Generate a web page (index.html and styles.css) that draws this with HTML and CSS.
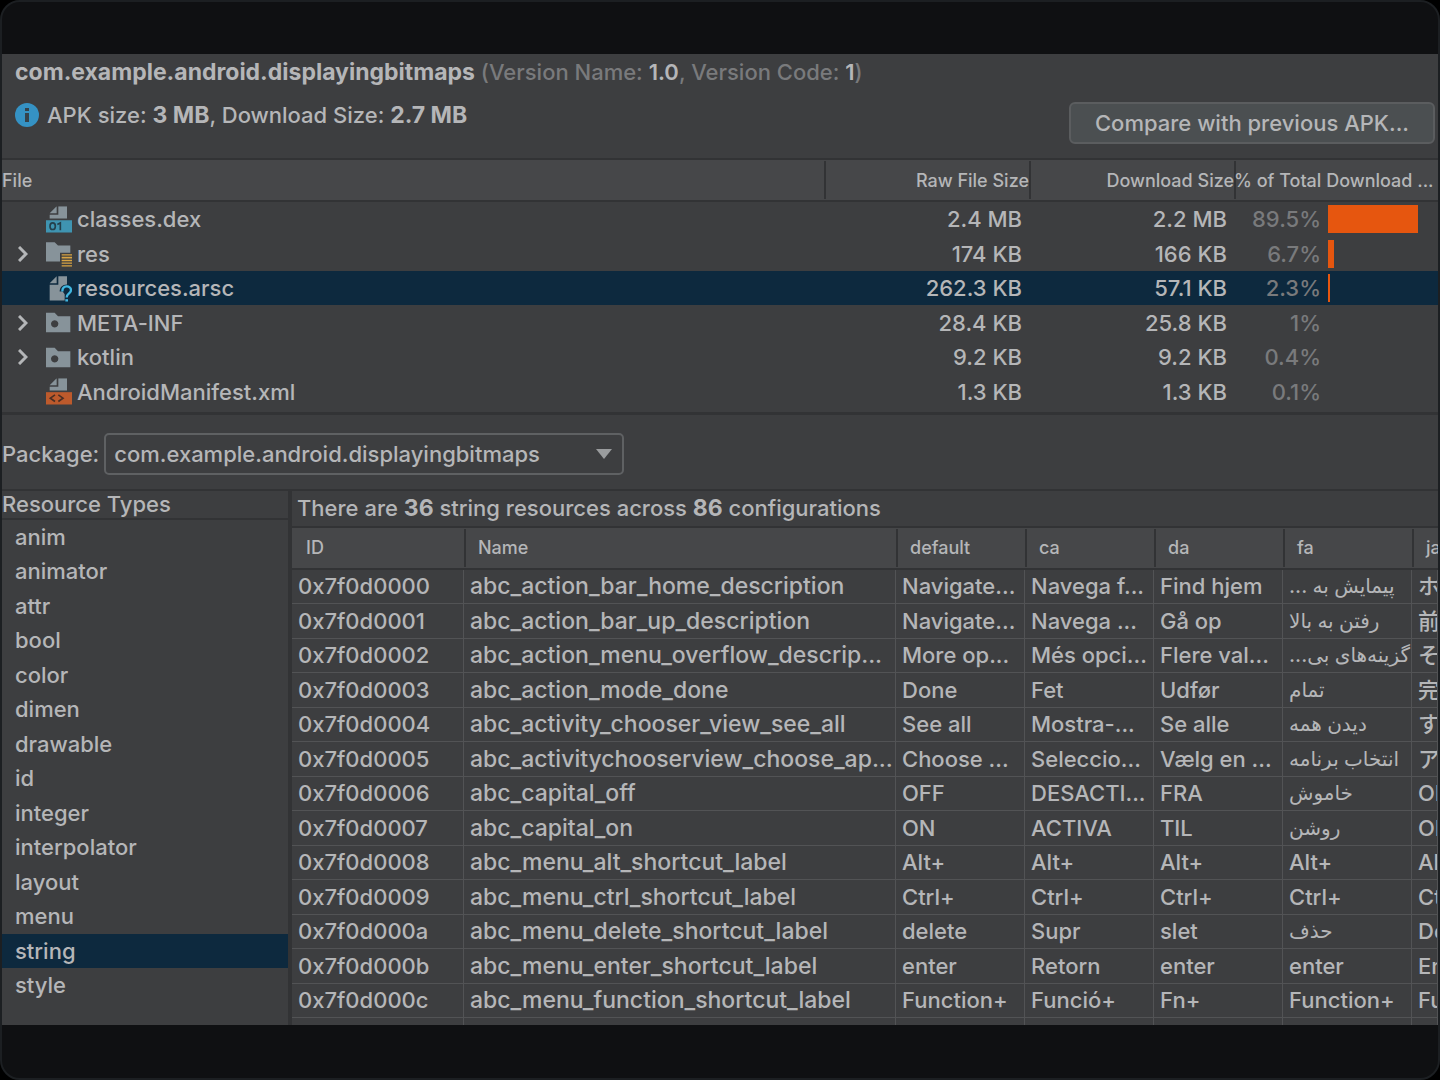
FILE: index.html
```html
<!DOCTYPE html>
<html lang="en">
<head>
<meta charset="utf-8">
<title>APK Analyzer</title>
<link rel="stylesheet" href="styles.css">
</head>
<body>
<svg class="sprite" aria-hidden="true">
  <symbol id="page-top" viewBox="0 0 78 80"><path fill="#87939a" d="M37 0h26v37H11V26h26zM11 21 32 0v21z"/></symbol>
  <symbol id="dex" viewBox="0 0 78 80"><use href="#page-top"/><path fill="#3f94b1" d="M0 42h78v37H0z"/><g fill="none" stroke="#24404c" stroke-width="5"><ellipse cx="20" cy="60" rx="8" ry="10"/><path d="m34 55 9-5v22"/></g></symbol>
  <symbol id="manifest" viewBox="0 0 78 80"><use href="#page-top"/><path fill="#bd5a2c" d="M0 42h78v37H0z"/><path fill="none" stroke="#4b2f24" stroke-width="5" d="m27 50-14 10 14 10M37 50l14 10-14 10"/></symbol>
  <symbol id="folder" viewBox="0 0 78 80"><path fill="#87939a" fill-rule="evenodd" d="M0 11h26l10 10h37v48H0zM26 33a11 11 0 1 0 .1 0z"/></symbol>
  <symbol id="res-folder" viewBox="0 0 78 80"><path fill="#87939a" d="M0 6h26l10 10h37v22H42v26H0z"/><path fill="#d8a343" d="M47 42h31v4H47zM47 50h31v5H47zM47 59h31v4H47zM47 67h31v4H47zM47 75h31v4H47z"/></symbol>
  <symbol id="unknown" viewBox="0 0 78 80"><path fill="#87939a" d="M37 3h26v25c-14 0-22 9-22 21h9l6 8v19H11V29h26zM11 24 32 3v21z"/><path fill="none" stroke="#40b6e0" stroke-width="7" d="M49 49c0-20 26-19 26-4 0 10-13 9-13 22"/><path fill="#40b6e0" d="M58 72h8v7h-8z"/></symbol>
  <symbol id="chevron" viewBox="0 0 10 16"><path fill="none" stroke="#b4b6b8" stroke-width="3" d="m1 1 7 7-7 7"/></symbol>
</svg>
<div class="frame">
<main class="app">
  <header class="summary">
    <div class="summary-text">
      <h1 class="app-id"><b>com.example.android.displayingbitmaps</b> <span class="muted">(Version Name: <b>1.0</b>, Version Code: <b>1</b>)</span></h1>
      <p class="sizes"><svg class="info" viewBox="0 0 24 24" aria-hidden="true"><circle cx="12" cy="12" r="12" fill="#3592c4"/><path fill="#35424b" d="M10 5h4v3h-4zM10 10h4v9h-4z"/></svg><span>APK size: <b>3 MB</b>, Download Size: <b>2.7 MB</b></span></p>
    </div>
    <button class="compare" type="button">Compare with previous APK...</button>
  </header>

  <table class="files">
    <colgroup><col><col class="c-size"><col class="c-size"><col class="c-share"></colgroup>
    <thead><tr><th>File</th><th class="num">Raw File Size</th><th class="num">Download Size</th><th>% of Total Download ...</th></tr></thead>
    <tbody>
      <tr><td><div class="file"><span class="twist"></span><svg class="icon"><use href="#dex"/></svg>classes.dex</div></td><td class="num">2.4 MB</td><td class="num">2.2 MB</td><td><div class="share"><span class="pct">89.5%</span><span class="bar" style="width:90px"></span></div></td></tr>
      <tr><td><div class="file"><span class="twist"><svg class="chevron"><use href="#chevron"/></svg></span><svg class="icon"><use href="#res-folder"/></svg>res</div></td><td class="num">174 KB</td><td class="num">166 KB</td><td><div class="share"><span class="pct">6.7%</span><span class="bar" style="width:6px"></span></div></td></tr>
      <tr class="selected"><td><div class="file"><span class="twist"></span><svg class="icon"><use href="#unknown"/></svg>resources.arsc</div></td><td class="num">262.3 KB</td><td class="num">57.1 KB</td><td><div class="share"><span class="pct">2.3%</span><span class="bar" style="width:2px"></span></div></td></tr>
      <tr><td><div class="file"><span class="twist"><svg class="chevron"><use href="#chevron"/></svg></span><svg class="icon"><use href="#folder"/></svg>META-INF</div></td><td class="num">28.4 KB</td><td class="num">25.8 KB</td><td><div class="share"><span class="pct">1%</span></div></td></tr>
      <tr><td><div class="file"><span class="twist"><svg class="chevron"><use href="#chevron"/></svg></span><svg class="icon"><use href="#folder"/></svg>kotlin</div></td><td class="num">9.2 KB</td><td class="num">9.2 KB</td><td><div class="share"><span class="pct">0.4%</span></div></td></tr>
      <tr><td><div class="file"><span class="twist"></span><svg class="icon"><use href="#manifest"/></svg>AndroidManifest.xml</div></td><td class="num">1.3 KB</td><td class="num">1.3 KB</td><td><div class="share"><span class="pct">0.1%</span></div></td></tr>
    </tbody>
  </table>

  <div class="package">
    <label for="package">Package:</label>
    <div class="picker">
      <select id="package"><option>com.example.android.displayingbitmaps</option></select>
      <svg class="arrow" viewBox="0 0 16 10" aria-hidden="true"><path fill="#9a9c9e" d="M0 0h16L8 10z"/></svg>
    </div>
  </div>

  <div class="split">
    <section class="types">
      <h2>Resource Types</h2>
      <ul>
        <li>anim</li><li>animator</li><li>attr</li><li>bool</li><li>color</li><li>dimen</li><li>drawable</li><li>id</li><li>integer</li><li>interpolator</li><li>layout</li><li>menu</li><li class="selected">string</li><li>style</li>
      </ul>
    </section>
    <section class="resources">
      <p class="count">There are <b>36</b> string resources across <b>86</b> configurations</p>
      <table class="strings">
        <colgroup><col class="c-id"><col class="c-name"><col class="c-lang"><col class="c-lang"><col class="c-lang"><col class="c-lang"><col></colgroup>
        <thead><tr><th>ID</th><th>Name</th><th>default</th><th>ca</th><th>da</th><th>fa</th><th>ja</th></tr></thead>
        <tbody>
          <tr><td>0x7f0d0000</td><td class="name">abc_action_bar_home_description</td><td>Navigate...</td><td>Navega f...</td><td>Find hjem</td><td class="rtl" lang="fa" dir="rtl">پیمایش به ...</td><td lang="ja">ホ</td></tr>
          <tr><td>0x7f0d0001</td><td class="name">abc_action_bar_up_description</td><td>Navigate...</td><td>Navega ...</td><td>Gå op</td><td class="rtl" lang="fa" dir="rtl">رفتن به بالا</td><td lang="ja">前</td></tr>
          <tr><td>0x7f0d0002</td><td class="name">abc_action_menu_overflow_descrip...</td><td>More op...</td><td>Més opci...</td><td>Flere val...</td><td class="rtl" lang="fa" dir="rtl">گزینه‌های بی...</td><td lang="ja">そ</td></tr>
          <tr><td>0x7f0d0003</td><td class="name">abc_action_mode_done</td><td>Done</td><td>Fet</td><td>Udfør</td><td class="rtl" lang="fa" dir="rtl">تمام</td><td lang="ja">完</td></tr>
          <tr><td>0x7f0d0004</td><td class="name">abc_activity_chooser_view_see_all</td><td>See all</td><td>Mostra-...</td><td>Se alle</td><td class="rtl" lang="fa" dir="rtl">دیدن همه</td><td lang="ja">す</td></tr>
          <tr><td>0x7f0d0005</td><td class="name">abc_activitychooserview_choose_ap...</td><td>Choose ...</td><td>Seleccio...</td><td>Vælg en ...</td><td class="rtl" lang="fa" dir="rtl">انتخاب برنامه</td><td lang="ja">ア</td></tr>
          <tr><td>0x7f0d0006</td><td class="name">abc_capital_off</td><td>OFF</td><td>DESACTI...</td><td>FRA</td><td class="rtl" lang="fa" dir="rtl">خاموش</td><td>OFF</td></tr>
          <tr><td>0x7f0d0007</td><td class="name">abc_capital_on</td><td>ON</td><td>ACTIVA</td><td>TIL</td><td class="rtl" lang="fa" dir="rtl">روشن</td><td>OFF</td></tr>
          <tr><td>0x7f0d0008</td><td class="name">abc_menu_alt_shortcut_label</td><td>Alt+</td><td>Alt+</td><td>Alt+</td><td>Alt+</td><td>Alt+</td></tr>
          <tr><td>0x7f0d0009</td><td class="name">abc_menu_ctrl_shortcut_label</td><td>Ctrl+</td><td>Ctrl+</td><td>Ctrl+</td><td>Ctrl+</td><td>Ctrl+</td></tr>
          <tr><td>0x7f0d000a</td><td class="name">abc_menu_delete_shortcut_label</td><td>delete</td><td>Supr</td><td>slet</td><td class="rtl" lang="fa" dir="rtl">حذف</td><td>Delete</td></tr>
          <tr><td>0x7f0d000b</td><td class="name">abc_menu_enter_shortcut_label</td><td>enter</td><td>Retorn</td><td>enter</td><td>enter</td><td>Enter</td></tr>
          <tr><td>0x7f0d000c</td><td class="name">abc_menu_function_shortcut_label</td><td>Function+</td><td>Funció+</td><td>Fn+</td><td>Function+</td><td>Function+</td></tr>
          <tr><td></td><td></td><td></td><td></td><td></td><td></td><td></td></tr>
        </tbody>
      </table>
    </section>
  </div>
</main>
</div>
</body>
</html>
```
FILE: styles.css
```css
:root {
  --panel: #3d3e40;
  --head: #464749;
  --line: #323335;
  --grid: #525355;
  --text: #b5b6b8;
  --muted: #797a7c;
  --select: #0d293e;
}

* { box-sizing: border-box; }

body {
  margin: 0;
  background: #000;
  color: var(--text);
  font: 450 22px/34px Inter, "Noto Sans CJK JP", "DejaVu Sans", sans-serif;
  font-variant-ligatures: no-contextual;
}

h1, h2, p, ul { margin: 0; padding: 0; font-size: 22px; font-weight: inherit; }
b { font-size: 23px; font-weight: 700; }
button, select { font: inherit; color: inherit; }
.sprite { display: none; }

.frame {
  display: flex;
  height: 100vh;
  padding: 52px 0 53px;
  border: 2px solid #1c1f22;
  border-radius: 20px;
  background: #0f1012;
  overflow: hidden;
}

.app {
  display: flex;
  flex: 1;
  flex-direction: column;
  min-width: 0;
  min-height: 0;
  overflow: hidden;
  background: var(--panel);
}

/* Summary */
.summary {
  display: flex;
  align-items: flex-end;
  justify-content: space-between;
  height: 104px;
  padding: 1px 3px 14px 13px;
}
.summary-text { align-self: flex-start; }
.app-id { height: 34px; }
.muted { color: var(--muted); }
.muted b { color: var(--text); font-size: 22px; font-weight: 600; }
.sizes { display: flex; align-items: center; gap: 8px; height: 34px; margin-top: 9px; }
.info { width: 24px; height: 24px; }
.compare {
  width: 366px;
  height: 42px;
  padding: 0;
  border: 2px solid #5b5d5f;
  border-radius: 6px;
  background: #4b4f51;
}

/* Tables */
table { width: 100%; border-collapse: separate; border-spacing: 0; table-layout: fixed; }
th, td { padding: 0; overflow: hidden; white-space: nowrap; text-align: left; font-weight: inherit; }
th {
  height: 44px;
  border: 0 solid var(--line);
  border-width: 2px 0;
  background: var(--head);
  font-size: 18px;
}
th + th {
  background: linear-gradient(var(--line), var(--line)) no-repeat left center / 2px 38px var(--head);
}
tbody tr { height: 34px; }
tbody tr:nth-child(even) { height: 35px; }
.selected { background: var(--select); }

.c-size { width: 205px; }
.c-share { width: 204px; }
.files { border-bottom: 3px solid var(--line); }
.files tbody::after { content: ""; display: block; height: 3px; }
.files th { padding-top: 2px; }
.files .num { text-align: right; }
.files td.num { padding-right: 7px; }
.file { display: flex; align-items: center; padding-left: 16px; }
.twist { display: flex; align-items: center; width: 28px; }
.chevron { width: 10px; height: 16px; }
.icon { width: 26px; height: 27px; margin-right: 5px; }
.share { display: flex; align-items: center; gap: 7px; }
.pct { width: 87px; text-align: right; color: var(--muted); }
.bar { height: 28px; background: #e6560f; }

/* Package picker */
.package { display: flex; align-items: center; gap: 5px; height: 74px; padding-top: 4px; }
.picker { display: grid; align-items: center; width: 520px; }
.picker > * { grid-area: 1 / 1; }
.picker select {
  width: 100%;
  height: 42px;
  padding: 0 8px;
  border: 2px solid #5f6163;
  border-radius: 5px;
  appearance: none;
  background: transparent;
}
.arrow { justify-self: end; width: 16px; height: 10px; margin-right: 12px; pointer-events: none; }

/* Resource browser */
.split { display: flex; flex: 1; min-height: 0; border-top: 2px solid var(--line); overflow: hidden; }
.types { width: 290px; border-right: 4px solid var(--line); }
.types h2 { height: 29px; line-height: 27px; border-bottom: 2px solid var(--line); }
.types ul { list-style: none; }
.types li { height: 34px; padding-left: 13px; }
.types li:nth-child(even) { height: 35px; }
.resources { flex: 1; min-width: 0; overflow: hidden; }
.count { height: 35px; padding-left: 5px; }
.c-id { width: 172px; }
.c-name { width: 432px; }
.c-lang { width: 129px; }
.strings th { padding-left: 14px; }
.strings td {
  padding-left: 6px;
  border: 0 solid var(--grid);
  border-width: 0 1px 1px 0;
  line-height: 33px;
}
.strings .name { font-size: 23px; }
.strings .rtl { text-align: left; font-size: 20px; }
```
